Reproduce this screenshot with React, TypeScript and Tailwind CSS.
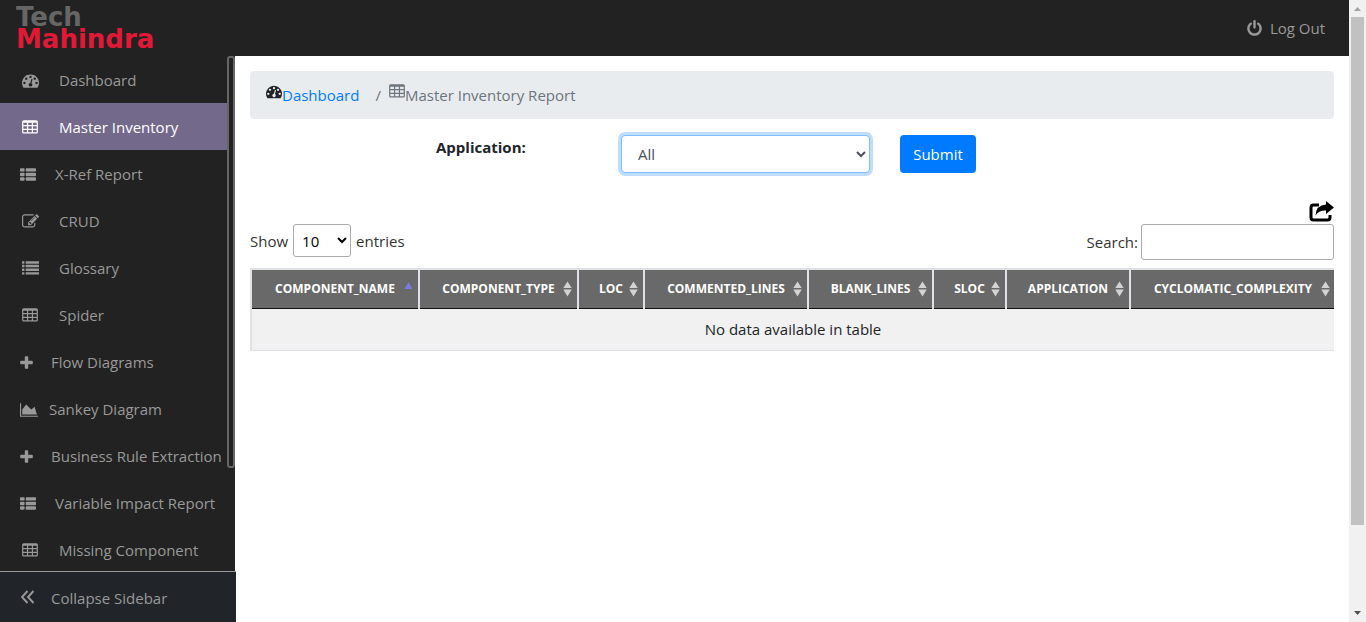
import React from "react";

type IconProps = { className?: string };

const TACHO =
  "M384 1152q0-53-37.5-90.5t-90.5-37.5-90.5 37.5-37.5 90.5 37.5 90.5 90.5 37.5 90.5-37.5 37.5-90.5zm192-448q0-53-37.5-90.5t-90.5-37.5-90.5 37.5-37.5 90.5 37.5 90.5 90.5 37.5 90.5-37.5 37.5-90.5zm428 481l101-382q6-26-7.5-48.5t-38.5-29.5-48 6.5-30 39.5l-101 382q-60 5-107 43.5t-63 98.5q-20 77 20 146t117 89 146-20 89-117q16-60-6-117t-72-91zm660-33q0-53-37.5-90.5t-90.5-37.5-90.5 37.5-37.5 90.5 37.5 90.5 90.5 37.5 90.5-37.5 37.5-90.5zm-640-640q0-53-37.5-90.5t-90.5-37.5-90.5 37.5-37.5 90.5 37.5 90.5 90.5 37.5 90.5-37.5 37.5-90.5zm448 192q0-53-37.5-90.5t-90.5-37.5-90.5 37.5-37.5 90.5 37.5 90.5 90.5 37.5 90.5-37.5 37.5-90.5zm320 448q0 261-141 483-19 29-54 29h-1402q-35 0-54-29-141-221-141-483 0-182 71-348t191-286 286-191 348-71 348 71 286 191 191 286 71 348z";
const PENCIL =
  "M888 1184l116-116-152-152-116 116v56h96v96h56zm440-720q-16-16-33 1l-350 350q-17 17-1 33t33-1l350-350q17-17 1-33zm80 594v190q0 119-84.5 203.5t-203.5 84.5h-832q-119 0-203.5-84.5t-84.5-203.5v-832q0-119 84.5-203.5t203.5-84.5h832q63 0 117 25 15 7 18 23 3 17-9 29l-49 49q-14 14-32 8-23-6-45-6h-832q-66 0-113 47t-47 113v832q0 66 47 113t113 47h832q66 0 113-47t47-113v-126q0-13 9-22l64-64q15-15 35-7t20 29zm-96-738l288 288-672 672h-288v-288zm444 132l-92 92-288-288 92-92q28-28 68-28t68 28l152 152q28 28 28 68t-28 68z";
const PLUS =
  "M1600 736v192q0 40-28 68t-68 28h-416v416q0 40-28 68t-68 28h-192q-40 0-68-28t-28-68v-416h-416q-40 0-68-28t-28-68v-192q0-40 28-68t68-28h416v-416q0-40 28-68t68-28h192q40 0 68 28t28 68v416h416q40 0 68 28t28 68z";
const POWER =
  "M1664 896q0 156-61 298t-164 245-245 164-298 61-298-61-245-164-164-245-61-298q0-182 80.5-343t226.5-270q43-32 95.5-25t83.5 50q32 42 24.5 94.5t-49.5 84.5q-98 74-151.5 181t-53.5 228q0 104 40.5 198.5t109.5 163.5 163.5 109.5 198.5 40.5 198.5-40.5 163.5-109.5 109.5-163.5 40.5-198.5q0-121-53.5-228t-151.5-181q-42-32-49.5-84.5t24.5-94.5q31-43 84-50t95 25q146 109 226.5 270t80.5 343zm-640-768v640q0 52-38 90t-90 38-90-38-38-90v-640q0-52 38-90t90-38 90 38 38 90z";

function Glyph({ d, className, box = "0 0 1792 1792" }: IconProps & { d: string; box?: string }) {
  return (
    <svg viewBox={box} className={className} fill="currentColor" fillRule="evenodd" aria-hidden="true">
      <path d={d} />
    </svg>
  );
}

const TachoIcon = ({ className = "size-[17px]" }: IconProps) => <Glyph d={TACHO} className={className} />;
const PencilIcon = () => <Glyph d={PENCIL} className="size-[17px]" />;
const PlusIcon = () => <Glyph d={PLUS} box="192 0 1408 1792" className="h-4 w-[13px]" />;
const AreaIcon = () => (
  <Glyph
    d="M2048 1536v128h-2048v-1536h128v1408h1920zm-384-1024l256 896h-1664v-576l448-576 576 576z"
    box="0 0 2048 1792"
    className="h-4 w-[18px]"
  />
);

const rows3 = [384, 768, 1152];

function TableIcon({ className = "h-[17px] w-4" }: IconProps) {
  const cells = rows3
    .flatMap((y) => [192, 704, 1216].map((x) => `M${x} ${y}h384v256h-384z`))
    .join("");
  return (
    <Glyph
      box="64 0 1664 1792"
      className={className}
      d={
        "M1728 288v1088q0 66-47 113t-113 47h-1344q-66 0-113-47t-47-113v-1088q0-66 47-113t113-47h1344q66 0 113 47t47 113z" +
        cells
      }
    />
  );
}

function ThListIcon() {
  return (
    <svg viewBox="0 0 1792 1792" className="size-4" fill="currentColor" aria-hidden="true">
      {[128, 640, 1152].map((y) => (
        <g key={y}>
          <rect x="0" y={y} width="512" height="384" rx="96" />
          <rect x="640" y={y} width="1152" height="384" rx="96" />
        </g>
      ))}
    </svg>
  );
}

function ListIcon() {
  return (
    <svg viewBox="0 0 1792 1792" className="size-[17px]" fill="currentColor" aria-hidden="true">
      {[128, 512, 896, 1280].map((y) => (
        <g key={y}>
          <rect x="0" y={y} width="256" height="256" rx="32" />
          <rect x="384" y={y} width="1408" height="256" rx="32" />
        </g>
      ))}
    </svg>
  );
}

function DoubleLeftIcon() {
  return (
    <svg viewBox="0 0 14 14" className="size-[14px]" fill="none" stroke="currentColor" strokeWidth="1.9" aria-hidden="true">
      <path d="M6.500 1L1 7L6.500 13M12.500 1L7 7L12.500 13" />
    </svg>
  );
}

function ShareIcon() {
  return (
    <svg viewBox="0 0 25 21" className="h-[21px] w-[25px]" aria-hidden="true">
      <path
        d="M10 4H4.500Q2 4 2 6.500V16.500Q2 19 4.500 19H18.500Q21 19 21 16.500V14"
        fill="none"
        stroke="#000"
        strokeWidth="3"
      />
      <path d="M17 0L25 6.500L17 13V9.500Q10 9 6.500 14.500Q7 4 17 3.500Z" fill="#000" />
    </svg>
  );
}

function SortIcon({ active }: { active?: boolean }) {
  return (
    <svg viewBox="0 0 9 16" className="h-4 w-[9px] shrink-0" aria-hidden="true">
      {active ? (
        <path d="M4.500 1L8.500 8H0.500Z" fill="#7b7bdc" />
      ) : (
        <path d="M4.500 0.500L8.700 7H0.300ZM0.300 8.500H8.700L4.500 15.500Z" fill="#d3d3d3" />
      )}
    </svg>
  );
}

const wide = "pl-[22px]";
const items = [
  { label: "Dashboard", icon: <TachoIcon />, pad: wide, slot: "w-[37px]" },
  { label: "Master Inventory", icon: <TableIcon />, pad: wide, slot: "w-[37px]", active: true },
  { label: "X-Ref Report", icon: <ThListIcon />, pad: "pl-5", slot: "w-[35px]" },
  { label: "CRUD", icon: <PencilIcon />, pad: wide, slot: "w-[37px]" },
  { label: "Glossary", icon: <ListIcon />, pad: wide, slot: "w-[37px]" },
  { label: "Spider", icon: <TableIcon />, pad: wide, slot: "w-[37px]" },
  { label: "Flow Diagrams", icon: <PlusIcon />, pad: "pl-5", slot: "w-[31px]" },
  { label: "Sankey Diagram", icon: <AreaIcon />, pad: "pl-5", slot: "w-[29px]" },
  { label: "Business Rule Extraction", icon: <PlusIcon />, pad: "pl-5", slot: "w-[31px]" },
  { label: "Variable Impact Report", icon: <ThListIcon />, pad: "pl-5", slot: "w-[35px]" },
  { label: "Missing Component", icon: <TableIcon />, pad: wide, slot: "w-[37px]" },
];

const columns = [
  { name: "COMPONENT_NAME", width: "w-[168px]" },
  { name: "COMPONENT_TYPE", width: "w-[159px]" },
  { name: "LOC", width: "w-[66px]" },
  { name: "COMMENTED_LINES", width: "w-[164px]" },
  { name: "BLANK_LINES", width: "w-[125px]" },
  { name: "SLOC", width: "w-[73px]" },
  { name: "APPLICATION", width: "w-[124px]" },
  { name: "CYCLOMATIC_COMPLEXITY", width: "w-auto" },
];

function Header() {
  return (
    <header className="flex h-14 shrink-0 items-center justify-between bg-[#222] pr-6 pl-4">
      <a href="#home" className="font-['DejaVu_Sans',sans-serif] text-[26px] leading-[22px] font-bold">
        <span className="block text-[#666]">Tech</span>
        <span className="block text-[#e31837]">Mahindra</span>
      </a>
      <a href="#logout" className="flex items-center gap-[7px] text-[#999]">
        <Glyph d={POWER} className="size-[17px]" />
        Log Out
      </a>
    </header>
  );
}

function Sidebar() {
  return (
    <aside className="flex w-[235px] shrink-0 flex-col bg-[#222] text-[#999]">
      <div className="flex min-h-0 flex-1 overflow-hidden">
        <nav className="min-w-0 flex-1">
          <ul>
            {items.map((it) => (
              <li key={it.label}>
                <a
                  href="#page"
                  className={`flex h-[47px] items-center whitespace-nowrap ${it.pad} ${
                    it.active ? "bg-[#73698a] text-white" : ""
                  }`}
                >
                  <span className={`shrink-0 pt-[2px] ${it.slot}`}>{it.icon}</span>
                  <span>{it.label}</span>
                </a>
              </li>
            ))}
          </ul>
        </nav>
        <div className="h-4/5 w-2 shrink-0 rounded-[3px] border-2 border-[#666] bg-[#222]" />
      </div>
      <button
        type="button"
        className="flex h-[51px] w-[236px] shrink-0 items-center gap-4 border-t border-[#999] bg-[#212529] pl-[21px]"
      >
        <DoubleLeftIcon />
        <span className="pt-[2px]">Collapse Sidebar</span>
      </button>
    </aside>
  );
}

function PageScrollbar() {
  return (
    <div className="flex w-[17px] shrink-0 flex-col items-center bg-[#f1f1f1]" aria-hidden="true">
      <svg viewBox="0 0 17 17" className="size-[17px] shrink-0">
        <path d="M5 11L8.500 7L12 11Z" fill="#a3a3a3" />
      </svg>
      <div className="flex w-[13px] flex-1 flex-col">
        <div className="w-full flex-[508] bg-[#c1c1c1]" />
        <div className="flex-[80]" />
      </div>
      <svg viewBox="0 0 17 17" className="size-[17px] shrink-0">
        <path d="M5 6L8.500 10L12 6Z" fill="#505050" />
      </svg>
    </div>
  );
}

function Main() {
  return (
    <main className="min-w-0 flex-1 p-[15px] text-[#212529]">
      <nav aria-label="Breadcrumb" className="flex h-12 items-center rounded bg-[#e9ecef] px-4">
        <TachoIcon className="mb-2 h-[17px] w-4" />
        <a href="#dashboard" className="text-[#007bff]">
          Dashboard
        </a>
        <span className="pr-2 pl-4 text-[#6c757d]">/</span>
        <TableIcon className="mb-2 h-[17px] w-4 text-[#6c757d]" />
        <span className="text-[#6c757d]">Master Inventory Report</span>
      </nav>

      <form className="mt-4 flex items-start" onSubmit={(e) => e.preventDefault()}>
        <label htmlFor="application" className="w-[371px] pl-[186px] font-bold">
          Application:
        </label>
        <select
          id="application"
          className="h-[38px] w-[249px] rounded border border-[#80bdff] bg-white px-3 text-[#495057] shadow-[0_0_0_3px_rgba(0,123,255,0.25)]"
        >
          <option>All</option>
        </select>
        <button type="submit" className="ml-[30px] h-[38px] w-[76px] rounded bg-[#007bff] text-white">
          Submit
        </button>
      </form>

      <div className="mt-7 flex justify-end">
        <button type="button" aria-label="Export">
          <ShareIcon />
        </button>
      </div>

      <div className="mt-[2px] flex items-start justify-between text-[#333]">
        <label className="flex items-center gap-[5px]">
          Show
          <select className="h-[33px] w-[58px] rounded-[3px] border border-[#aaa] bg-white px-1 text-black">
            <option>10</option>
          </select>
          entries
        </label>
        <label className="flex items-center gap-[3px]">
          Search:
          <input type="search" className="h-9 w-[193px] rounded-[3px] border border-[#aaa] bg-white px-1" />
        </label>
      </div>

      <div className="mt-2 overflow-hidden">
        <table className="-mr-[3px] w-[calc(100%+3px)] table-fixed border-collapse">
          <thead>
            <tr>
              {columns.map((c, i) => (
                <th
                  key={c.name}
                  className={`h-[39px] border-2 border-[#dee2e6] border-b-[#111] bg-[#696969] p-0 text-[12px] font-bold text-white [border-bottom-width:1px] ${c.width}`}
                >
                  <span className="flex items-center justify-end gap-1 pt-px pr-[5px]">
                    <span className="flex-1 pl-[18px] text-center">{c.name}</span>
                    <SortIcon active={i === 0} />
                  </span>
                </th>
              ))}
            </tr>
          </thead>
          <tbody>
            <tr>
              <td
                colSpan={columns.length}
                className="h-[42px] border-b border-l-2 border-[#dee2e6] bg-[#f1f1f1] p-0 pr-[2px] text-center"
              >
                No data available in table
              </td>
            </tr>
          </tbody>
        </table>
      </div>
    </main>
  );
}

export default function App() {
  return (
    <div className="flex h-screen bg-white font-['Open_Sans','Noto_Sans',sans-serif] text-[15px] leading-6">
      <div className="flex min-w-0 flex-1 flex-col">
        <Header />
        <div className="flex min-h-0 flex-1">
          <Sidebar />
          <Main />
        </div>
      </div>
      <PageScrollbar />
    </div>
  );
}
